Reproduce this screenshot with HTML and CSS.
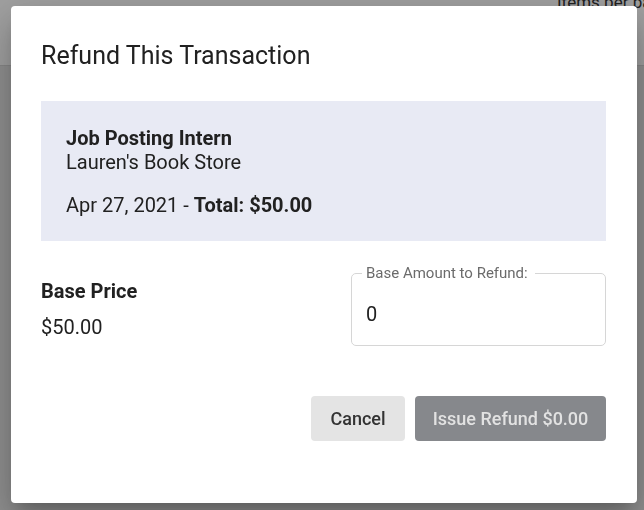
FILE: index.html
```html
<!DOCTYPE html>
<html>
<head>
<meta charset="utf-8">
<link rel="stylesheet" href="styles.css">
</head>
<body>
<div class="page">
  <div class="page-header"><span class="items-per-page">Items per page</span></div>
  <div class="page-body"></div>
</div>
<div class="overlay"></div>
<div class="dialog">
  <h2 class="dialog-title">Refund This Transaction</h2>
  <div class="info-box">
    <div class="info-name">Job Posting Intern</div>
    <div class="info-store">Lauren's Book Store</div>
    <div class="info-date">Apr 27, 2021 - <strong>Total: $50.00</strong></div>
  </div>
  <div class="price-row">
    <div class="price-col">
      <div class="price-label">Base Price</div>
      <div class="price-value">$50.00</div>
    </div>
    <fieldset class="amount-field">
      <legend class="amount-legend">Base Amount to Refund:</legend>
      <div class="amount-value">0</div>
    </fieldset>
  </div>
  <div class="actions">
    <button class="btn btn-cancel">Cancel</button>
    <button class="btn btn-issue">Issue Refund $0.00</button>
  </div>
</div>
</body>
</html>
```
FILE: styles.css
```css
html, body {
  margin: 0;
  padding: 0;
  width: 644px;
  height: 510px;
  overflow: hidden;
  font-family: Roboto, "Liberation Sans", sans-serif;
}
.page {
  height: 510px;
  background: #e6e6e6;
}
.page-header {
  height: 65px;
  background: #ffffff;
  border-bottom: 1px solid #d8d8d8;
  position: relative;
}
.items-per-page {
  position: absolute;
  left: 557px;
  top: -8px;
  font-size: 17px;
  color: #333;
  white-space: nowrap;
}
.overlay {
  position: fixed;
  inset: 0;
  background: rgba(0, 0, 0, 0.37);
}
.dialog {
  position: absolute;
  left: 11px;
  top: 6px;
  width: 626px;
  height: 497px;
  box-sizing: border-box;
  background: #fff;
  border-radius: 4px;
  padding: 30px 31px 0 30px;
  box-shadow: 0 11px 15px -7px rgba(0,0,0,.2), 0 24px 38px 3px rgba(0,0,0,.14), 0 9px 46px 8px rgba(0,0,0,.12);
  color: #212121;
}
.dialog-title {
  margin: 0;
  font-size: 25px;
  font-weight: 400;
  line-height: 40px;
  color: #212121;
}
.info-box {
  margin-top: 25px;
  background: #e8eaf4;
  padding: 25px 25px 0 25px;
  font-size: 20px;
  line-height: 24px;
  height: 140px;
  box-sizing: border-box;
}
.info-name {
  font-weight: 700;
}
.info-date {
  margin-top: 19px;
}
.info-date strong {
  font-weight: 700;
}
.price-row {
  display: flex;
  justify-content: space-between;
  align-items: flex-start;
  margin-top: 25px;
}
.price-col {
  padding-top: 13px;
  font-size: 20px;
}
.price-label {
  font-weight: 700;
  line-height: 24px;
}
.price-value {
  margin-top: 12px;
  line-height: 24px;
}
.amount-field {
  margin: 0;
  width: 255px;
  height: 80px;
  box-sizing: border-box;
  border: 1px solid #d6d6d6;
  border-radius: 5px;
  padding: 0 10px;
}
.amount-legend {
  font-size: 15px;
  line-height: 14px;
  color: #6b6b6b;
  padding: 0 7px 0 4px;
  margin-left: 0;
}
.amount-value {
  font-size: 20px;
  line-height: 24px;
  margin-top: 22px;
  padding-left: 4px;
  color: #212121;
}
.actions {
  display: flex;
  justify-content: flex-end;
  gap: 10px;
  margin-top: 50px;
}
.btn {
  height: 45px;
  border: none;
  border-radius: 4px;
  font-family: Roboto, "Liberation Sans", sans-serif;
  font-size: 18px;
  font-weight: 500;
  padding: 0;
  white-space: nowrap;
}
.btn-cancel {
  width: 94px;
  background: #e4e4e4;
  color: #333;
}
.btn-issue {
  width: 191px;
  background: #86888c;
  color: #e2e2e2;
}
```
